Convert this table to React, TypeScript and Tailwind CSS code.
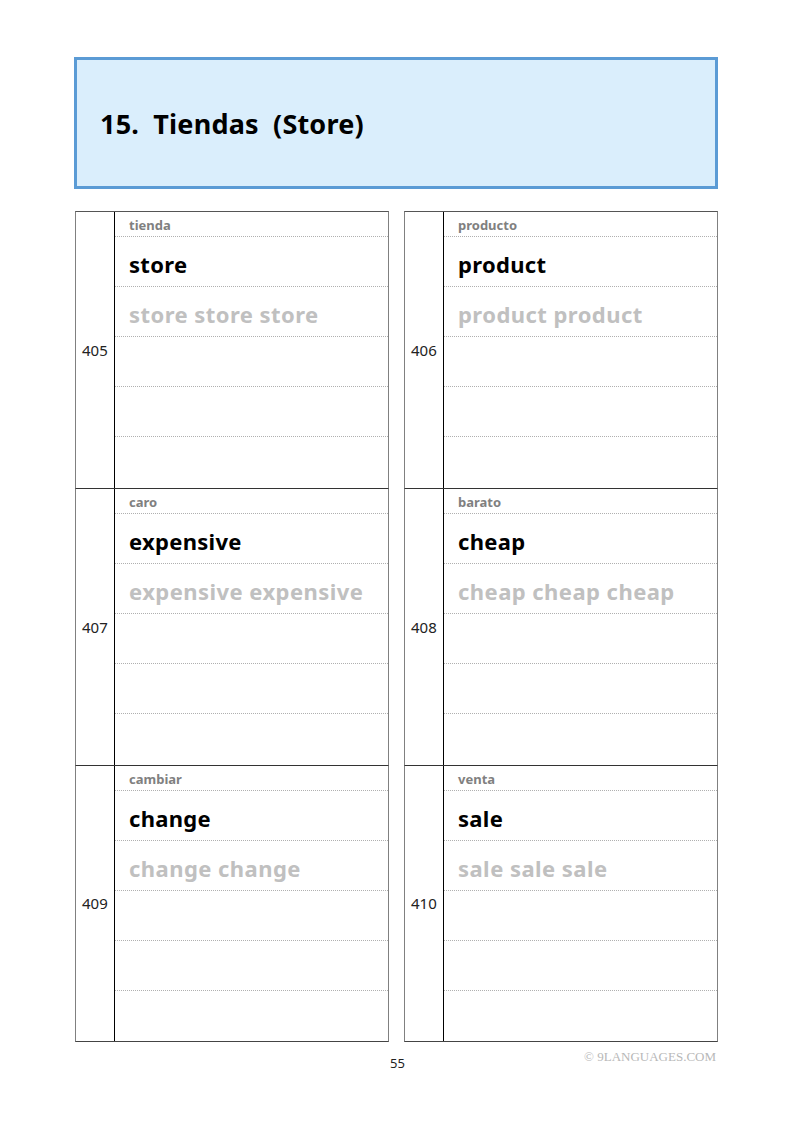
import React from "react";

const blocks = [
  [
    { n: "405", es: "tienda", en: "store", rep: "store store store" },
    { n: "406", es: "producto", en: "product", rep: "product product" },
  ],
  [
    { n: "407", es: "caro", en: "expensive", rep: "expensive expensive" },
    { n: "408", es: "barato", en: "cheap", rep: "cheap cheap cheap" },
  ],
  [
    { n: "409", es: "cambiar", en: "change", rep: "change change" },
    { n: "410", es: "venta", en: "sale", rep: "sale sale sale" },
  ],
];

type Item = { n: string; es: string; en: string; rep: string };

function Block({ item, first, last }: { item: Item; first: boolean; last: boolean }) {
  return (
    <div
      className={`flex h-[277px] border-x border-x-[#808080] ${first ? "border-t border-t-[#555]" : "border-t border-t-[#333]"} ${last ? "border-b border-b-[#444]" : ""}`}
    >
      <div className="w-[39px] shrink-0 border-r border-r-black flex items-center pl-[6px] text-[15px] text-[#222]">
        {item.n}
      </div>
      <div className="flex-1 flex flex-col">
        <div className="h-[25px] border-b border-dotted border-b-[#b0b0b0] pl-[14px] pt-[3px] flex items-center text-[13px] font-bold text-[#808080]">
          {item.es}
        </div>
        <div className="h-[50px] border-b border-dotted border-b-[#b0b0b0] pl-[14px] pt-[5px] flex items-center text-[22px] font-bold text-black tracking-[0.3px]">
          {item.en}
        </div>
        <div className="h-[50px] border-b border-dotted border-b-[#b0b0b0] pl-[14px] pt-[5px] flex items-center text-[22px] font-bold text-[#c0c0c0] tracking-[0.45px]">
          {item.rep}
        </div>
        <div className="h-[50px] border-b border-dotted border-b-[#b0b0b0]" />
        <div className="h-[50px] border-b border-dotted border-b-[#b0b0b0]" />
        <div className="flex-1" />
      </div>
    </div>
  );
}

export default function App() {
  return (
    <div
      className="w-[794px] h-[1123px] bg-white relative"
      style={{ fontFamily: '"Noto Sans", "Open Sans", sans-serif' }}
    >
      <div className="pt-[57px] pl-[74px]">
        <div className="w-[644px] h-[132px] border-[3px] border-[#5b9bd5] bg-[#daeefc] flex items-center pl-[23px]">
          <h1 className="text-[27px] font-bold text-black [word-spacing:7px] tracking-[0.2px] mt-[2px]">15. Tiendas (Store)</h1>
        </div>
      </div>
      <div className="mt-[22px] ml-[75px] grid grid-cols-[314px_314px] gap-x-[15px]">
        {blocks.map((row, i) =>
          row.map((item) => (
            <Block key={item.n} item={item} first={i === 0} last={i === blocks.length - 1} />
          ))
        )}
      </div>
      <div className="relative h-[40px]">
        <div className="absolute left-[390px] top-[12px] text-[13px] text-[#222]">55</div>
        <div
          className="absolute right-[78px] top-[5px] text-[13px] text-[#b8b8b8]"
          style={{ fontFamily: '"Liberation Serif", serif' }}
        >
          © 9LANGUAGES.COM
        </div>
      </div>
    </div>
  );
}
